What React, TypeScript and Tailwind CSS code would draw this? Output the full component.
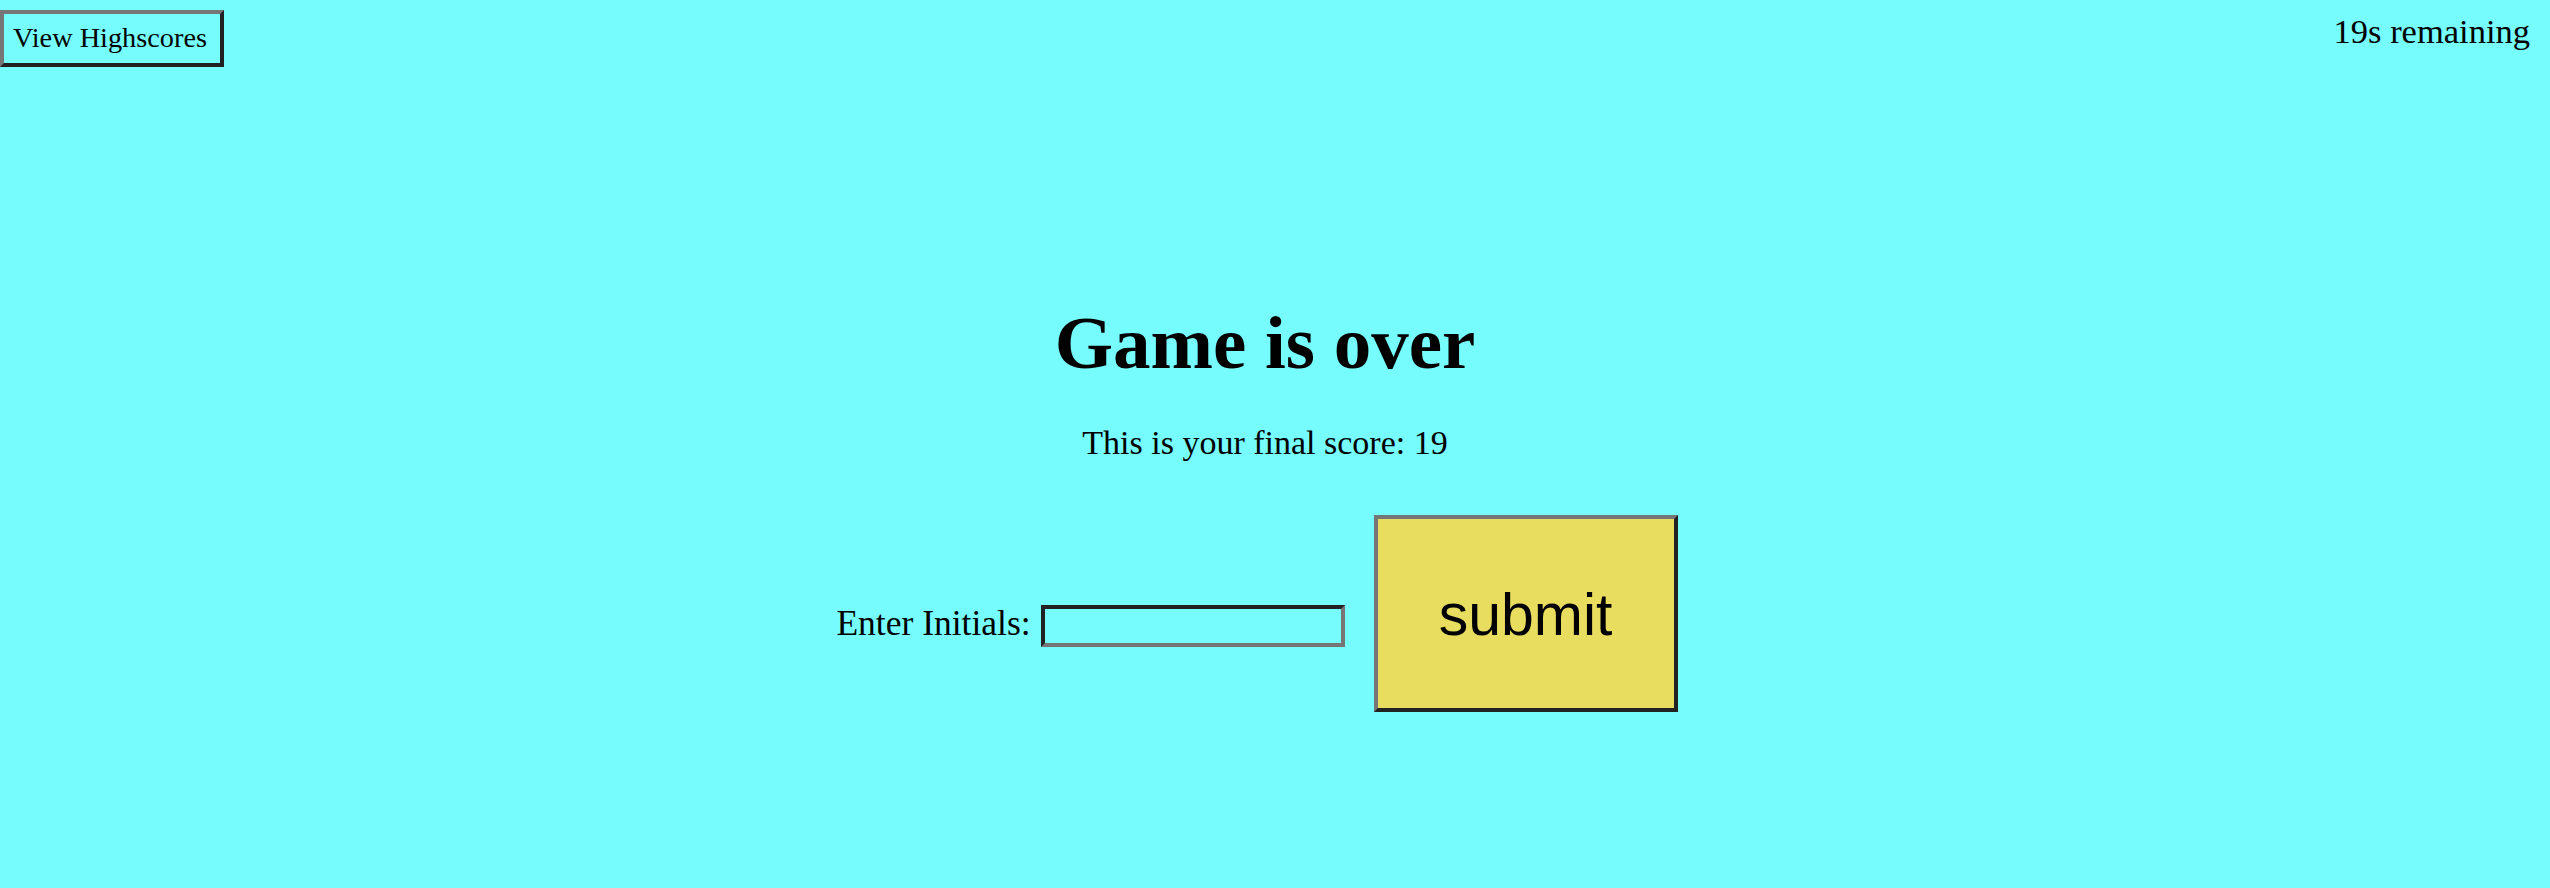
import { useState } from "react";

const serif = "font-['Liberation_Serif',serif]";

const App = () => {
  const [initials, setInitials] = useState("");

  return (
    <div className={`min-h-screen w-full bg-[#76fcfd] text-black ${serif}`}>
      {/* top bar */}
      <div className="flex items-start justify-between pr-[20px]">
        <button className="mt-[10px] h-[57px] border-4 border-t-[#767676] border-l-[#767676] border-b-[#222] border-r-[#222] bg-[#76fcfd] pl-[9px] pr-[13px] text-[28.3px] leading-none">
          View Highscores
        </button>
        <div className="pt-[14px] text-[34.5px] leading-none">19s remaining</div>
      </div>

      {/* game over panel */}
      <div className="flex flex-col items-center pr-[20px] pt-[238px]">
        <h1 className="text-[75px] font-bold leading-none">Game is over</h1>
        <p className="mt-[46px] text-[34px] leading-none">
          This is your final score: 19
        </p>

        <div className="mr-[16px] mt-[55px] flex items-start">
          <label className="mt-[91px] text-[35.5px] leading-none">Enter Initials:</label>
          <input
            value={initials}
            onChange={(e) => setInitials(e.target.value)}
            className="ml-[10px] mt-[90px] h-[42px] w-[304px] border-4 border-t-[#222] border-l-[#222] border-b-[#767676] border-r-[#767676] bg-transparent px-2 text-[26px] outline-none"
          />
          <button className="ml-[29px] w-[304px] border-4 border-t-[#767676] border-l-[#767676] border-b-[#222] border-r-[#222] bg-[#e8dd5e] pt-[67px] pb-[63px] text-center font-['Liberation_Sans',sans-serif] text-[59px] leading-none">
            submit
          </button>
        </div>
      </div>
    </div>
  );
};

export default App;
